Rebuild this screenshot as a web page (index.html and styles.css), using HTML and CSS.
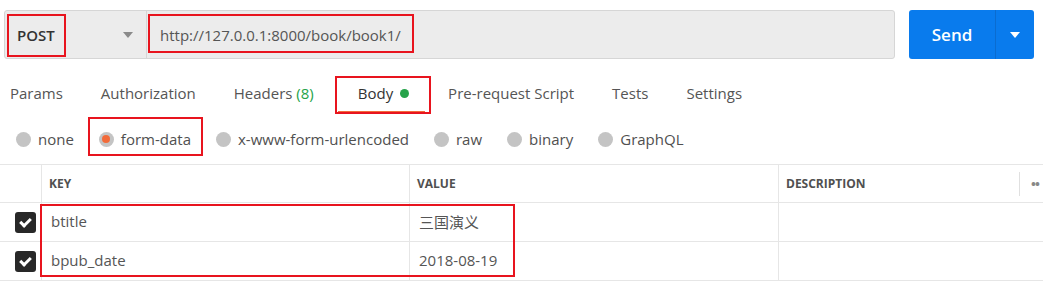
FILE: index.html
```html
<!DOCTYPE html>
<html>
<head>
    <meta charset="UTF-8">
    <title>POST book1</title>
    <link rel="stylesheet" href="styles.css">
</head>
<body>
<div class="page">
    <div class="urlbar">
        <div class="request">
            <div class="method">
                <span>POST</span>
                <i class="caret"></i>
            </div>
            <div class="url">http://127.0.0.1:8000/book/book1/</div>
        </div>
        <div class="send">
            <span class="send-label">Send</span>
            <span class="send-more"><i class="caret white"></i></span>
        </div>
    </div>

    <ul class="tabs">
        <li>Params</li>
        <li>Authorization</li>
        <li>Headers <em>(8)</em></li>
        <li class="active">Body <b class="dot"></b></li>
        <li>Pre-request Script</li>
        <li>Tests</li>
        <li>Settings</li>
    </ul>

    <div class="modes">
        <label><i class="radio"></i>none</label>
        <label><i class="radio on"></i>form-data</label>
        <label><i class="radio"></i>x-www-form-urlencoded</label>
        <label><i class="radio"></i>raw</label>
        <label><i class="radio"></i>binary</label>
        <label><i class="radio"></i>GraphQL</label>
    </div>

    <div class="grid">
        <div class="cell chk head"></div>
        <div class="cell head">KEY</div>
        <div class="cell head">VALUE</div>
        <div class="cell head desc">DESCRIPTION<span class="more"><span class="sep"></span>••</span></div>

        <div class="cell chk"><i class="box"></i></div>
        <div class="cell">btitle</div>
        <div class="cell">三国演义</div>
        <div class="cell"></div>

        <div class="cell chk"><i class="box"></i></div>
        <div class="cell">bpub_date</div>
        <div class="cell">2018-08-19</div>
        <div class="cell"></div>
    </div>

    <!-- red annotation boxes -->
    <div class="mark m-post"></div>
    <div class="mark m-url"></div>
    <div class="mark m-body"></div>
    <div class="mark m-form"></div>
    <div class="mark m-rows"></div>
</div>
</body>
</html>
```

FILE: styles.css
```css
body{margin:0;background:#fff;font-family:"Open Sans","Noto Sans CJK SC",sans-serif;color:#505050;}
.page{position:relative;width:1043px;height:282px;overflow:hidden;}

.urlbar{display:flex;padding:10px 9px 0 4px;height:49px;}
.request{flex:1;display:flex;background:#ececec;border:1px solid #d6d6d6;border-radius:3px;box-sizing:border-box;}
.method{width:142px;box-sizing:border-box;border-right:1px solid #d6d6d6;display:flex;align-items:center;justify-content:space-between;padding:0 13px 0 12px;font-size:15px;font-weight:600;color:#333;}
.caret{display:inline-block;width:0;height:0;border-left:5px solid transparent;border-right:5px solid transparent;border-top:6px solid #8a8a8a;}
.caret.white{border-top-color:#fff;}
.url{display:flex;align-items:center;padding-left:13px;font-size:15px;color:#555;}

.send{margin-left:14px;width:125px;display:flex;background:#097bed;border-radius:3px;color:#fff;}
.send-label{width:86px;display:flex;align-items:center;justify-content:center;font-size:17px;font-weight:600;border-right:1px solid #0a6cd0;}
.send-more{flex:1;display:flex;align-items:center;justify-content:center;}

.tabs{list-style:none;margin:17px 0 0;padding:0 0 0 10px;display:flex;gap:38px;height:37px;}
.tabs li{font-size:15px;line-height:35px;color:#555;border-bottom:2px solid transparent;white-space:nowrap;}
.tabs em{font-style:normal;color:#26a34a;}
.tabs li.active{color:#333;border-bottom-color:#f26b3a;padding:0 16px 0 20px;margin:0 -15px 0 -14px;}
.dot{display:inline-block;width:9px;height:9px;border-radius:50%;background:#26a34a;margin-left:3px;vertical-align:1px;}

.modes{display:flex;align-items:center;height:38px;margin-top:7px;padding-left:16px;gap:25px;}
.modes label{display:flex;align-items:center;font-size:15px;color:#505050;white-space:nowrap;}
.radio{width:15px;height:15px;border-radius:50%;background:#c4c4c4;margin-right:7px;display:flex;align-items:center;justify-content:center;}
.radio.on::after{content:"";width:8px;height:8px;border-radius:50%;background:#f26b3a;}

.grid{margin-top:6px;display:grid;grid-template-columns:41px 368px 369px 1fr;grid-template-rows:38px 39px 39px;border-top:1px solid #e6e6e6;}
.cell{border-bottom:1px solid #e6e6e6;border-left:1px solid #e6e6e6;display:flex;align-items:center;padding:0 0 2px 9px;font-size:15px;color:#555;}
.cell.chk{border-left:none;padding:0 0 0 15px;}
.head{font-size:12px;font-weight:700;color:#505050;padding:0 0 0 7px;}
.desc{position:relative;}
.more{position:absolute;left:240px;top:7px;display:flex;align-items:center;height:24px;color:#888;font-size:13px;letter-spacing:-1px;}
.sep{width:1px;height:24px;background:#e0e0e0;margin-right:11px;}
.box{width:21px;height:21px;border-radius:3px;background:#282828;position:relative;}
.box::after{content:"";position:absolute;left:5px;top:3px;width:8px;height:4px;border-left:3px solid #fff;border-bottom:3px solid #fff;transform:translate(0,3px) rotate(-45deg);}

.mark{position:absolute;border:2px solid #e8141e;box-sizing:border-box;}
.m-post{left:7px;top:14px;width:59px;height:43px;}
.m-url{left:148px;top:14px;width:266px;height:39px;}
.m-body{left:335px;top:76px;width:96px;height:38px;}
.m-form{left:88px;top:117px;width:115px;height:39px;}
.m-rows{left:40px;top:204px;width:475px;height:73px;}
```
